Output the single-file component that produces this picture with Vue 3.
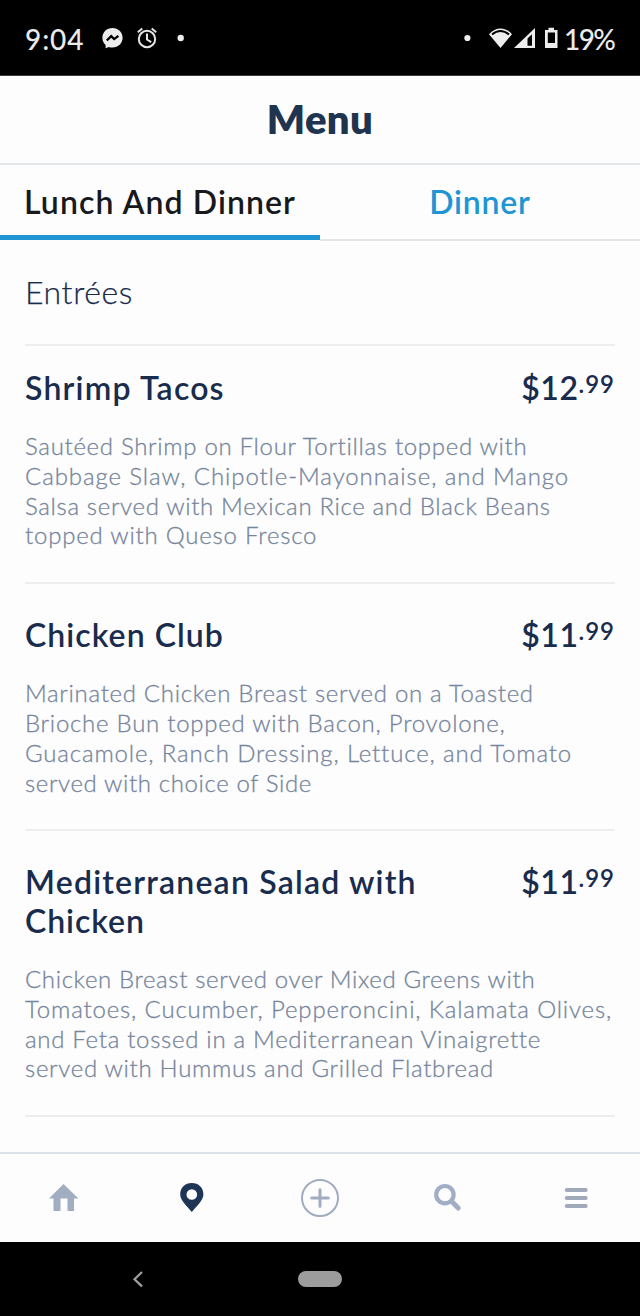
<script setup>
const items = [
  {
    title: [{ text: 'Shrimp Tacos', ls: 1.2 }],
    dollars: '$12',
    cents: '.99',
    lines: [
      { text: 'Sautéed Shrimp on Flour Tortillas topped with', ls: 0.69 },
      { text: 'Cabbage Slaw, Chipotle-Mayonnaise, and Mango', ls: 0.91 },
      { text: 'Salsa served with Mexican Rice and Black Beans', ls: 0.66 },
      { text: 'topped with Queso Fresco', ls: 0.78 },
    ],
  },
  {
    title: [{ text: 'Chicken Club', ls: 1.05 }],
    dollars: '$11',
    cents: '.99',
    lines: [
      { text: 'Marinated Chicken Breast served on a Toasted', ls: 0.69 },
      { text: 'Brioche Bun topped with Bacon, Provolone,', ls: 0.74 },
      { text: 'Guacamole, Ranch Dressing, Lettuce, and Tomato', ls: 0.85 },
      { text: 'served with choice of Side', ls: 0.62 },
    ],
  },
  {
    title: [
      { text: 'Mediterranean Salad with', ls: 1.2 },
      { text: 'Chicken', ls: 0.95 },
    ],
    dollars: '$11',
    cents: '.99',
    lines: [
      { text: 'Chicken Breast served over Mixed Greens with', ls: 0.63 },
      { text: 'Tomatoes, Cucumber, Pepperoncini, Kalamata Olives,', ls: 0.84 },
      { text: 'and Feta tossed in a Mediterranean Vinaigrette', ls: 0.7 },
      { text: 'served with Hummus and Grilled Flatbread', ls: 0.69 },
    ],
  },
]
</script>

<template>
  <div class="screen">
    <div class="status">
      <span class="clock">9:04</span>
      <svg class="status-icons" width="90" height="30" viewBox="100 24 90 30">
        <path d="M112.5 28c-5.8 0-10.1 4.2-10.1 9.8 0 3 1.2 5.500 3.200 7.200v3.200l3.200-1.200c1.200.4 2.400.5 3.700.5 5.800 0 10.100-4.200 10.100-9.700S118.300 28 112.500 28z" fill="#ededed" />
        <path d="M106.800 40.500l4.400-4.400 3 3 4.200-3.200" fill="none" stroke="#000" stroke-width="2.300" />
        <g fill="none" stroke="#e6e6e6" stroke-width="2">
          <circle cx="147" cy="39" r="8.200" />
          <path d="M147 33.500v6l4.200 2.600M137.800 32.200l4.500-3.700M151.700 28.500l4.500 3.700" />
        </g>
        <circle cx="180.700" cy="38" r="3.200" fill="#ededed" />
      </svg>
      <span class="spacer"></span>
      <svg class="status-icons" width="100" height="30" viewBox="460 24 100 30">
        <circle cx="467.400" cy="38" r="3.100" fill="#ededed" />
        <path d="M489 34.200C495.500 26.500 505.500 26.500 512 34.200L500.500 48z" fill="#ededed" />
        <path d="M492 34.500q8.500-7 17 0" fill="none" stroke="#000" stroke-width="1.800" />
        <path d="M514 48L535 28v20z" fill="#ededed" />
        <path d="M527.500 38.500l4.500-4.200v11.500h-4.500z" fill="#000" />
        <path d="M545 30h3.500v-2.300h5.500V30h3.500v18H545z" fill="#ededed" />
        <path d="M547.800 32.500h7.200v10.500h-7.200z" fill="#000" />
      </svg>
      <span class="battery">19%</span>
    </div>

    <header class="header"><h1>Menu</h1></header>

    <nav class="tabs">
      <div class="tab active"><span>Lunch And Dinner</span></div>
      <div class="tab"><span class="tab-blue">Dinner</span></div>
    </nav>

    <main class="content">
      <h2 class="section">Entrées</h2>
      <article v-for="item in items" :key="item.title[0].text" class="item">
        <div class="item-head">
          <h3>
            <span v-for="t in item.title" :key="t.text" class="line" :style="{ letterSpacing: t.ls + 'px' }">{{ t.text }}</span>
          </h3>
          <div class="price"><span>{{ item.dollars }}</span><span class="cents">{{ item.cents }}</span></div>
        </div>
        <p>
          <span v-for="l in item.lines" :key="l.text" class="line" :style="{ letterSpacing: l.ls + 'px' }">{{ l.text }}</span>
        </p>
      </article>
    </main>

    <nav class="bottom">
      <div class="nav-cell">
        <svg width="40" height="40" viewBox="-20 -20 40 40" fill="#a1aec1">
          <path d="M-.5-14L14.500.5H10V13H3.500V.5h-7V13h-7V.5H-15z" />
        </svg>
      </div>
      <div class="nav-cell">
        <svg width="40" height="40" viewBox="-20 -20 40 40">
          <path fill-rule="evenodd" d="M-.2-15c-6.800 0-11.600 4.800-11.600 11.300C-11.800 3-4.500 8.500-.2 14 4.100 8.500 11.400 3 11.400-3.700 11.400-10.200 6.600-15-.2-15zM-.2-8.800a5.300 5.300 0 1 1 0 10.600a5.300 5.300 0 0 1 0-10.600z" fill="#1f3556" />
        </svg>
      </div>
      <div class="nav-cell">
        <svg width="40" height="40" viewBox="-20 -20 40 40" fill="none" stroke="#a1acc0">
          <circle r="18" stroke-width="2" />
          <path d="M-8.300 0H8.300M0-8.300V8.300" stroke-width="3" stroke-linecap="round" />
        </svg>
      </div>
      <div class="nav-cell">
        <svg width="40" height="40" viewBox="-20 -20 40 40" fill="none" stroke="#a1aec4">
          <circle cx="-3.100" cy="-3.300" r="8.700" stroke-width="4.200" />
          <path d="M3.800 3.600L10.200 10" stroke-width="5" stroke-linecap="round" />
        </svg>
      </div>
      <div class="nav-cell">
        <svg width="40" height="40" viewBox="-20 -20 40 40" fill="none" stroke="#a1a9bb" stroke-width="4" stroke-linecap="round">
          <path d="M-9.300-8H9.700M-9.300 0H9.700M-9.300 8H9.700" />
        </svg>
      </div>
    </nav>

    <div class="system">
      <svg width="14" height="20" viewBox="0 0 14 20" fill="none" stroke="#a0a0a0" stroke-width="2.200">
        <path d="M12 3L4.500 10.200l7.500 7.200" />
      </svg>
      <div class="pill"></div>
    </div>
  </div>
</template>

<style>
body {
  margin: 0;
}
</style>

<style scoped>
.screen {
  width: 640px;
  height: 1316px;
  display: flex;
  flex-direction: column;
  overflow: hidden;
  background: #fdfdfe;
  font-family: Lato, "Liberation Sans", sans-serif;
  color: #192c4d;
}
h1,
h2,
h3,
p {
  margin: 0;
}
.status {
  box-sizing: border-box;
  height: 76px;
  flex: none;
  display: flex;
  align-items: center;
  padding: 2px 25px 0;
  background: #000;
  color: #ebebeb;
  font-size: 28px;
  font-weight: 500;
  border-bottom: 1px solid #3c3c3c;
}
.clock {
  width: 75px;
  letter-spacing: 0.9px;
}
.spacer {
  flex: 1;
}
.battery {
  width: 51px;
  margin-left: 4px;
  letter-spacing: -1.6px;
  white-space: nowrap;
}
.header {
  height: 87px;
  flex: none;
  border-bottom: 2px solid #e4e7ea;
  display: flex;
  align-items: center;
  justify-content: center;
}
h1 {
  font-size: 40px;
  line-height: 48px;
  font-weight: 800;
  letter-spacing: 0.4px;
  margin-top: -2px;
  color: #20334f;
}
.tabs {
  height: 76px;
  flex: none;
  display: flex;
}
.tab {
  box-sizing: border-box;
  width: 320px;
  display: flex;
  align-items: center;
  justify-content: center;
  font-size: 32px;
  font-weight: 600;
  letter-spacing: 0.8px;
  color: #17191d;
  padding-bottom: 1px;
  border-bottom: 2px solid #e4e7ea;
  white-space: nowrap;
}
.active {
  height: 75px;
  padding-top: 3px;
  letter-spacing: 1.1px;
  border-bottom: 5px solid #2095d3;
}
.tab-blue {
  color: #2095d3;
}
.content {
  flex: 1;
  min-height: 0;
  padding: 0 25px;
}
.section {
  height: 102.500px;
  line-height: 101px;
  font-size: 32px;
  font-weight: 300;
  letter-spacing: 0.6px;
  -webkit-text-stroke: 0.25px currentColor;
  border-bottom: 2px solid #eceef0;
}
.item {
  padding: 31.600px 0 32px;
  border-bottom: 2px solid #eceef0;
}
.section + .item {
  padding-top: 23px;
}
.item-head {
  display: flex;
  justify-content: space-between;
  font-size: 32px;
  line-height: 38.500px;
  font-weight: 600;
}
h3 {
  font: inherit;
}
.line {
  display: block;
  white-space: nowrap;
}
.price {
  display: flex;
  letter-spacing: 0.5px;
}
.cents {
  font-size: 24px;
  line-height: 30px;
  letter-spacing: 1px;
}
p {
  margin-top: 24px;
  font-size: 24px;
  line-height: 29.800px;
  font-weight: 300;
  color: #76859b;
  -webkit-text-stroke: 0.3px currentColor;
}
.bottom {
  height: 88px;
  flex: none;
  border-top: 2px solid #dbe1e6;
  display: flex;
}
.nav-cell {
  flex: 1;
  display: flex;
  align-items: center;
  justify-content: center;
  padding-bottom: 1px;
}
.system {
  height: 74px;
  flex: none;
  box-sizing: border-box;
  display: flex;
  align-items: center;
  padding: 0 0 0 130px;
  background: #000;
}
.pill {
  width: 44px;
  height: 16px;
  margin-left: 154px;
  border-radius: 8px;
  background: #9c9c9c;
}
</style>
